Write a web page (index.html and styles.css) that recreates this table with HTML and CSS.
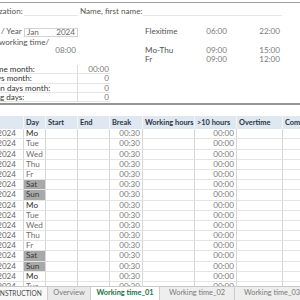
FILE: index.html
```html
<!DOCTYPE html>
<html>
<head>
<meta charset="utf-8">
<link rel="stylesheet" href="styles.css">
</head>
<body>
<div class="screen">
  <div class="sheet">
    <div class="rule"></div>
    <div class="top">
      <div class="r1 lbl c1">Organization:</div>
      <div class="r1 uline c23"></div>
      <div class="r1 lbl c45">Name, first name:</div>
      <div class="r1 uline c68"></div>

      <div class="r2 lbl c1">Month / Year</div>
      <div class="r2 box c23"><span>Jan</span><span>2024</span></div>
      <div class="r2 lbl c6">Flexitime</div>
      <div class="r2 num c7">06:00</div>
      <div class="r2 num c8">22:00</div>

      <div class="r3 lbl c12">Target working time/</div>

      <div class="r4 num c3">08:00</div>
      <div class="r4 lbl c6">Mo-Thu</div>
      <div class="r4 num c7">09:00</div>
      <div class="r4 num c8">15:00</div>

      <div class="r5 lbl c6">Fr</div>
      <div class="r5 num c7">09:00</div>
      <div class="r5 num c8">12:00</div>
    </div>
    <div class="summary">
      <div class="slbl">Overtime month:</div><div class="sval">00:00</div>
      <div class="slbl">Holidays month:</div><div class="sval">0</div>
      <div class="slbl">Vacation days month:</div><div class="sval">0</div>
      <div class="slbl">Working days:</div><div class="sval">0</div>
    </div>
    <div class="rule2"></div>
    <div class="table">
      <div class="th"></div><div class="th">Day</div><div class="th">Start</div><div class="th">End</div><div class="th">Break</div><div class="th">Working hours</div><div class="th">&gt;10 hours</div><div class="th">Overtime</div><div class="th">Comment</div>

      <div class="td date">01.01.2024</div><div class="td day mo">Mo</div><div class="td"></div><div class="td"></div><div class="td num">00:30</div><div class="td"></div><div class="td num">00:00</div><div class="td"></div><div class="td"></div>
      <div class="td date">02.01.2024</div><div class="td day">Tue</div><div class="td"></div><div class="td"></div><div class="td num">00:30</div><div class="td"></div><div class="td num">00:00</div><div class="td"></div><div class="td"></div>
      <div class="td date">03.01.2024</div><div class="td day">Wed</div><div class="td"></div><div class="td"></div><div class="td num">00:30</div><div class="td"></div><div class="td num">00:00</div><div class="td"></div><div class="td"></div>
      <div class="td date">04.01.2024</div><div class="td day">Thu</div><div class="td"></div><div class="td"></div><div class="td num">00:30</div><div class="td"></div><div class="td num">00:00</div><div class="td"></div><div class="td"></div>
      <div class="td date">05.01.2024</div><div class="td day">Fr</div><div class="td"></div><div class="td"></div><div class="td num">00:30</div><div class="td"></div><div class="td num">00:00</div><div class="td"></div><div class="td"></div>
      <div class="td date">06.01.2024</div><div class="td day we">Sat</div><div class="td"></div><div class="td"></div><div class="td num">00:30</div><div class="td"></div><div class="td num">00:00</div><div class="td"></div><div class="td"></div>
      <div class="td date">07.01.2024</div><div class="td day we">Sun</div><div class="td"></div><div class="td"></div><div class="td num">00:30</div><div class="td"></div><div class="td num">00:00</div><div class="td"></div><div class="td"></div>
      <div class="td date">08.01.2024</div><div class="td day mo">Mo</div><div class="td"></div><div class="td"></div><div class="td num">00:30</div><div class="td"></div><div class="td num">00:00</div><div class="td"></div><div class="td"></div>
      <div class="td date">09.01.2024</div><div class="td day">Tue</div><div class="td"></div><div class="td"></div><div class="td num">00:30</div><div class="td"></div><div class="td num">00:00</div><div class="td"></div><div class="td"></div>
      <div class="td date">10.01.2024</div><div class="td day">Wed</div><div class="td"></div><div class="td"></div><div class="td num">00:30</div><div class="td"></div><div class="td num">00:00</div><div class="td"></div><div class="td"></div>
      <div class="td date">11.01.2024</div><div class="td day">Thu</div><div class="td"></div><div class="td"></div><div class="td num">00:30</div><div class="td"></div><div class="td num">00:00</div><div class="td"></div><div class="td"></div>
      <div class="td date">12.01.2024</div><div class="td day">Fr</div><div class="td"></div><div class="td"></div><div class="td num">00:30</div><div class="td"></div><div class="td num">00:00</div><div class="td"></div><div class="td"></div>
      <div class="td date">13.01.2024</div><div class="td day we">Sat</div><div class="td"></div><div class="td"></div><div class="td num">00:30</div><div class="td"></div><div class="td num">00:00</div><div class="td"></div><div class="td"></div>
      <div class="td date">14.01.2024</div><div class="td day we">Sun</div><div class="td"></div><div class="td"></div><div class="td num">00:30</div><div class="td"></div><div class="td num">00:00</div><div class="td"></div><div class="td"></div>
      <div class="td date">15.01.2024</div><div class="td day mo">Mo</div><div class="td"></div><div class="td"></div><div class="td num">00:30</div><div class="td"></div><div class="td num">00:00</div><div class="td"></div><div class="td"></div>
      <div class="td date">16.01.2024</div><div class="td day">Tue</div><div class="td"></div><div class="td"></div><div class="td num">00:30</div><div class="td"></div><div class="td num">00:00</div><div class="td"></div><div class="td"></div>
    </div>
  </div>
  <div class="tabs">
    <div class="tab t-ins">INSTRUCTION</div>
    <div class="tab t-ov">Overview</div>
    <div class="tab t-act">Working time_01</div>
    <div class="tab t-wt">Working time_02</div>
    <div class="tab t-wt">Working time_03</div>
  </div>
</div>
</body>
</html>
```

FILE: styles.css
```css
html, body {
  margin: 0;
  padding: 0;
  background: #ffffff;
}
body {
  font-family: Lato, "Liberation Sans", sans-serif;
  font-size: 8.1px;
  color: #555555;
}
.screen {
  width: 300px;
  height: 300px;
  overflow: hidden;
  display: flex;
  flex-direction: column;
}
.sheet {
  flex: 1;
  overflow: hidden;
  margin-left: -27px;
  width: 350px;
}
.rule {
  margin-top: 2px;
  border-top: 1px solid #a0a0a0;
}
.top {
  display: grid;
  grid-template-columns: 51px 22px 32px 32px 33px 58px 28px 53px 40px;
  grid-template-rows: 13px 10px 10px 9px 9px 9px;
  margin-top: 1px;
}
.top > div {
  line-height: 9px;
  white-space: nowrap;
}
.r1 { grid-row: 1; align-self: center; }
.r2 { grid-row: 3; }
.r3 { grid-row: 4; }
.r4 { grid-row: 5; }
.r5 { grid-row: 6; }
.c1 { grid-column: 1; }
.c12 { grid-column: 1 / 4; }
.c23 { grid-column: 2 / 4; }
.c3 { grid-column: 3; }
.c45 { grid-column: 4 / 6; }
.c6 { grid-column: 6; }
.c68 { grid-column: 6 / 9; }
.c7 { grid-column: 7; }
.c8 { grid-column: 8; }
.lbl { padding-left: 2px; }
.r3.lbl { line-height: 8px; padding-top: 1px; }
.num { text-align: right; padding-right: 2px; color: #7a7a7a; }
.r1.lbl { padding-top: 1px; }
.uline {
  align-self: stretch;
  border-bottom: 1px solid #e6e6e6;
  margin-bottom: 1px;
}
.box {
  display: flex;
  justify-content: space-between;
  border: 1px solid #d2d2d2;
  padding: 0 2px;
  margin-top: 1px;
  height: 9px;
  box-sizing: border-box;
  line-height: 7px !important;
  color: #666;
}
.summary {
  display: grid;
  grid-template-columns: 105px 32px;
  grid-auto-rows: 9.3px;
  margin-top: 1px;
}
.slbl, .sval {
  border-bottom: 1px solid #e6e6e6;
  line-height: 9px;
  white-space: nowrap;
}
.slbl {
  padding-left: 1px;
  border-right: 1px solid #dcdcdc;
  color: #333;
}
.sval {
  text-align: right;
  padding-right: 1px;
  color: #7a7a7a;
}
.rule2 {
  margin-top: 1px;
  border-top: 2px solid #959595;
}
.table {
  margin-top: 11px;
  display: grid;
  grid-template-columns: 51px 22px 32px 32px 33px 52px 42px 46px 60px;
  grid-template-rows: 13px;
  grid-auto-rows: 10.2px;
}
.th {
  background: #dfe7f0;
  font-weight: 700;
  color: #2a3644;
  padding-left: 2px;
  line-height: 13px;
  white-space: nowrap;
  overflow: hidden;
  border-right: 1px solid #f4f7fa;
  font-size: 7.4px;
}
.td {
  border-bottom: 1px solid #e4e4e4;
  border-right: 1px solid #d6d6d6;
  line-height: 9.5px;
  white-space: nowrap;
  overflow: hidden;
  color: #6e6e6e;
}
.td.date {
  text-align: right;
  padding-right: 7px;
  color: #666;
}
.td.day { padding-left: 2px; }
.td.day.mo { color: #2a2a2a; }
.td.day.we {
  background: #a9a9a9;
  color: #3a3a3a;
}
.td.num {
  text-align: right;
  padding-right: 2px;
  color: #7a7a7a;
}
.tabs {
  flex: none;
  height: 13px;
  display: flex;
  border-top: 1px solid #cacaca;
  background: #eeeeee;
  margin-left: -3px;
  font-size: 7.4px;
  line-height: 12px;
  color: #7a7a7a;
}
.tab {
  flex: none;
  text-align: center;
  white-space: nowrap;
  overflow: hidden;
  border-right: 1px solid #cdcdcd;
  box-sizing: border-box;
}
.t-ins {
  width: 51px;
  text-align: left;
  padding-left: 1px;
  background: #f8f8f8;
  color: #4a4a4a;
  font-size: 6.6px;
}
.t-ov { width: 43px; background: #e9e9e9; }
.t-act {
  width: 69px;
  background: #ffffff;
  color: #217346;
  font-weight: 700;
}
.t-wt { width: 75px; }
```
